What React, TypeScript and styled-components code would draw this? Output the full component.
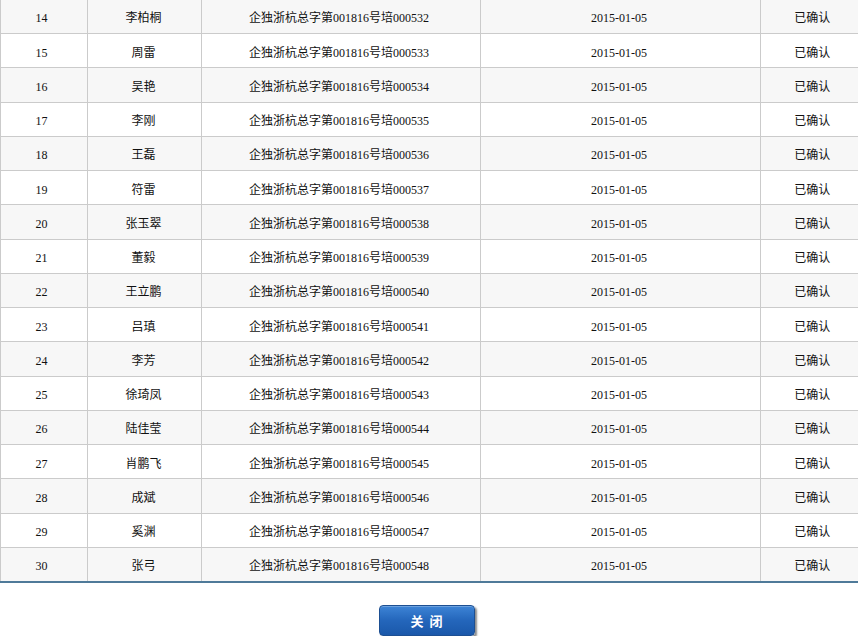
import React from "react";
import styled, { createGlobalStyle } from "styled-components";

const Global = createGlobalStyle`
  html, body { margin: 0; padding: 0; background: #fff; }
  body { font-family: "Liberation Serif", "Noto Sans CJK SC", serif; font-size: 12px; color: #111; }
`;

const Page = styled.div`
  width: 859px;
  display: flex;
  flex-direction: column;
  align-items: flex-start;
`;

const Table = styled.table`
  width: 857px;
  margin-top: -1.25px;
  border-collapse: collapse;
  table-layout: fixed;
  border-bottom: 2px solid #4f7a99;
`;

const Row = styled.tr<{ $alt: boolean }>`
  height: 34.25px;
  background: ${(p) => (p.$alt ? "#f7f7f7" : "#ffffff")};
`;

const Cell = styled.td<{ $last?: boolean; $shift?: number }>`
  padding: 4px ${(p) => (p.$shift && p.$shift < 0 ? -p.$shift * 2 : 0)}px 0
    ${(p) => (p.$shift && p.$shift > 0 ? p.$shift * 2 : 0)}px;
  text-align: center;
  vertical-align: middle;
  border-top: 1px solid #cbcbcb;
  border-left: 1px solid #cbcbcb;
  border-right: ${(p) => (p.$last ? "none" : "1px solid #cbcbcb")};
  font-size: 12px;
  line-height: 14px;
  color: #111;
  white-space: nowrap;
`;

const Footer = styled.div`
  width: 857px;
  display: flex;
  justify-content: center;
  padding-top: 22px;
`;

const CloseButton = styled.button`
  width: 96px;
  height: 31px;
  margin-right: 4px;
  border: 1px solid #1d4f92;
  border-radius: 4px;
  background: linear-gradient(to bottom, #3d84d6 0%, #2466bb 50%, #1a58aa 100%);
  box-shadow: 2px 2px 2px rgba(0, 0, 0, 0.45), inset 0 1px 0 rgba(255, 255, 255, 0.25);
  color: #fff;
  font-family: "Noto Sans CJK SC", sans-serif;
  font-weight: bold;
  font-size: 13px;
  letter-spacing: 6px;
  padding: 0 0 0 6px;
  cursor: pointer;
`;

const names = [
  "李柏桐", "周雷", "吴艳", "李刚", "王磊", "符雷", "张玉翠", "董毅", "王立鹏",
  "吕瑱", "李芳", "徐琦凤", "陆佳莹", "肖鹏飞", "成斌", "奚渊", "张弓",
];

export default function App() {
  return (
    <Page>
      <Global />
      <Table>
        <colgroup>
          <col style={{ width: 87 }} />
          <col style={{ width: 114 }} />
          <col style={{ width: 279 }} />
          <col style={{ width: 280 }} />
          <col style={{ width: 97 }} />
        </colgroup>
        <tbody>
          {names.map((n, i) => {
            const num = 14 + i;
            return (
              <Row key={num} $alt={i % 2 === 0}>
                <Cell $shift={-2.5}>{num}</Cell>
                <Cell $shift={-1}>{n}</Cell>
                <Cell $shift={-2}>企独浙杭总字第001816号培{String(532 + i).padStart(6, "0")}</Cell>
                <Cell $shift={-1.5}>2015-01-05</Cell>
                <Cell $last $shift={3}>已确认</Cell>
              </Row>
            );
          })}
        </tbody>
      </Table>
      <Footer>
        <CloseButton>关闭</CloseButton>
      </Footer>
    </Page>
  );
}
